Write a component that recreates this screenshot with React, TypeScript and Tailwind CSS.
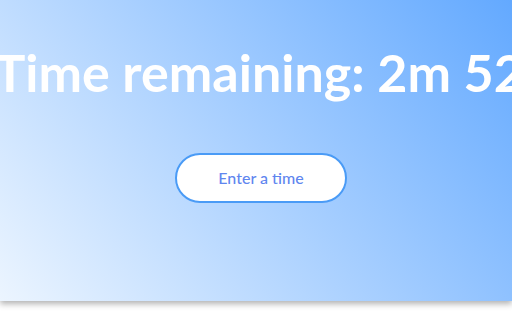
export default function App() {
  return (
    <div className="h-[320px] w-[512px] overflow-hidden bg-white font-['Lato','Open_Sans',sans-serif]">
      <div className="flex h-[301px] flex-col items-center bg-[linear-gradient(51deg,#ecf5ff,#63a9ff)] pt-[40px] shadow-[0_3px_6px_rgba(0,0,0,0.3)]">
        <h1 className="ml-[29px] whitespace-nowrap text-[52px] font-bold leading-[64px] text-white">
          Time remaining: 2m 52s
        </h1>
        <button className="ml-[10px] mt-[49px] flex h-[50px] w-[172px] items-center justify-center rounded-full border-2 border-[#4a9bf6] bg-white text-[16px] font-medium text-[#5f86ef]">
          Enter a time
        </button>
      </div>
    </div>
  );
}
